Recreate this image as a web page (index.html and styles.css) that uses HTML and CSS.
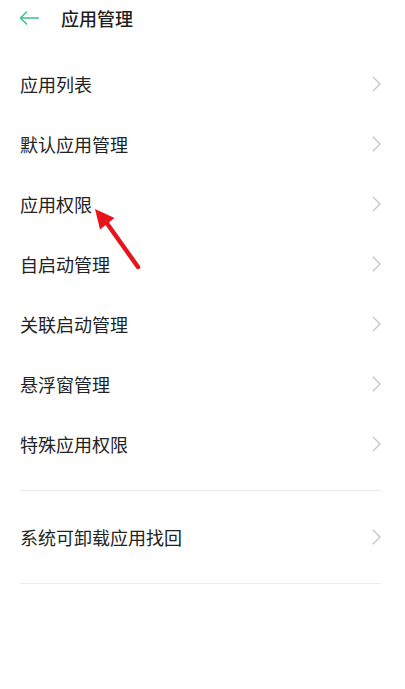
FILE: index.html
```html
<!DOCTYPE html>
<html lang="zh-CN">
<head>
<meta charset="utf-8">
<title>应用管理</title>
<link rel="stylesheet" href="styles.css">
</head>
<body>
<div class="page">
  <header class="header">
    <svg class="back" width="20" height="14" viewBox="0 0 20 14"><path d="M19.5 7H1.5M7.5 1L1.5 7L7.5 13" fill="none" stroke="#3cbf8c" stroke-width="1.5" stroke-linecap="round" stroke-linejoin="round"/></svg>
    <h1 class="title">应用管理</h1>
  </header>
  <ul class="list">
    <li class="row"><span class="label">应用列表</span><svg class="chev" width="9" height="16" viewBox="0 0 9 16"><path d="M0.8 0.8L8 8L0.8 15.2" fill="none" stroke="#c6c6c6" stroke-width="1.3"/></svg></li>
    <li class="row"><span class="label">默认应用管理</span><svg class="chev" width="9" height="16" viewBox="0 0 9 16"><path d="M0.8 0.8L8 8L0.8 15.2" fill="none" stroke="#c6c6c6" stroke-width="1.3"/></svg></li>
    <li class="row"><span class="label">应用权限</span><svg class="chev" width="9" height="16" viewBox="0 0 9 16"><path d="M0.8 0.8L8 8L0.8 15.2" fill="none" stroke="#c6c6c6" stroke-width="1.3"/></svg></li>
    <li class="row"><span class="label">自启动管理</span><svg class="chev" width="9" height="16" viewBox="0 0 9 16"><path d="M0.8 0.8L8 8L0.8 15.2" fill="none" stroke="#c6c6c6" stroke-width="1.3"/></svg></li>
    <li class="row"><span class="label">关联启动管理</span><svg class="chev" width="9" height="16" viewBox="0 0 9 16"><path d="M0.8 0.8L8 8L0.8 15.2" fill="none" stroke="#c6c6c6" stroke-width="1.3"/></svg></li>
    <li class="row"><span class="label">悬浮窗管理</span><svg class="chev" width="9" height="16" viewBox="0 0 9 16"><path d="M0.8 0.8L8 8L0.8 15.2" fill="none" stroke="#c6c6c6" stroke-width="1.3"/></svg></li>
    <li class="row"><span class="label">特殊应用权限</span><svg class="chev" width="9" height="16" viewBox="0 0 9 16"><path d="M0.8 0.8L8 8L0.8 15.2" fill="none" stroke="#c6c6c6" stroke-width="1.3"/></svg></li>
  </ul>
  <ul class="list group">
    <li class="row"><span class="label">系统可卸载应用找回</span><svg class="chev" width="9" height="16" viewBox="0 0 9 16"><path d="M0.8 0.8L8 8L0.8 15.2" fill="none" stroke="#c6c6c6" stroke-width="1.3"/></svg></li>
  </ul>
  <svg class="annotation" width="405" height="689" viewBox="0 0 405 689">
    <line x1="138" y1="267" x2="106" y2="222" stroke="#e8141c" stroke-width="4.4" stroke-linecap="round"/>
    <polygon points="95,209 114.5,218 100,229.5" fill="#e8141c"/>
  </svg>
</div>
</body>
</html>
```
FILE: styles.css
```css
* {
  box-sizing: border-box;
}
html, body {
  margin: 0;
  padding: 0;
  background: #ffffff;
}
body {
  font-family: "Noto Sans CJK SC", "Noto Sans", sans-serif;
  color: #222222;
}
.page {
  position: relative;
  width: 405px;
  min-height: 689px;
  padding: 0 24px 0 20px;
}
.header {
  height: 36px;
  display: flex;
  align-items: center;
}
.back {
  margin-left: -1px;
  flex: none;
}
.title {
  margin: 0 0 0 22px;
  font-size: 18px;
  font-weight: 500;
  line-height: 36px;
  color: #1e1e1e;
}
.list {
  list-style: none;
  margin: 0;
  padding: 18px 0 0;
}
.row {
  height: 60px;
  display: flex;
  align-items: center;
  justify-content: space-between;
}
.label {
  font-size: 18px;
  line-height: 24px;
  color: #232323;
}
.chev {
  flex: none;
}
.group {
  margin-top: 16px;
  padding: 16px 0;
  border-top: 1px solid #ebebeb;
  border-bottom: 1px solid #ebebeb;
}
.annotation {
  position: absolute;
  left: 0;
  top: 0;
  pointer-events: none;
}
```
